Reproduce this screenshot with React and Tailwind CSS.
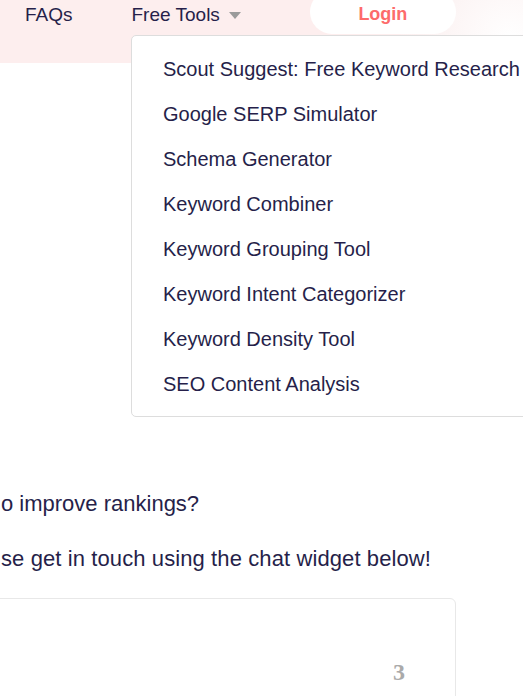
import React from 'react'

const tools = [
  'Scout Suggest: Free Keyword Research',
  'Google SERP Simulator',
  'Schema Generator',
  'Keyword Combiner',
  'Keyword Grouping Tool',
  'Keyword Intent Categorizer',
  'Keyword Density Tool',
  'SEO Content Analysis',
];

const App = () => {
  return (
    <div className="relative w-[523px] h-[696px] overflow-hidden bg-white text-[#261f4a]" style={{ fontFamily: '"Liberation Sans", Arial, sans-serif' }}>
      {/* Header */}
      <header className="relative h-[63px] bg-[#fdeeee] overflow-hidden">
        <div className="absolute -top-[60px] left-[400px] w-[220px] h-[200px] rounded-full bg-[radial-gradient(circle,#ffffff_0%,#fbf1f1_60%,#fdeeee_100%)]" />
        <nav className="relative flex items-start text-[19px]">
          <a className="ml-[25px] mt-[4px] leading-[21px]">FAQs</a>
          <a className="ml-[59px] mt-[4px] leading-[21px] flex items-center">
            Free Tools
            <span className="ml-[9px] mt-[1px] w-0 h-0 border-l-[6px] border-r-[6px] border-t-[7px] border-l-transparent border-r-transparent border-t-[#9b9b9b]" />
          </a>
          <button className="ml-[69px] -mt-[10px] w-[146px] h-[44px] rounded-full bg-white text-[#fd6b6b] font-bold text-[18px] pt-[5px]">
            Login
          </button>
        </nav>
      </header>

      {/* Dropdown */}
      <div className="absolute left-[131px] top-[35px] w-[430px] border border-[#dddddd] rounded-[5px] bg-white py-[10px]">
        {tools.map((t) => (
          <div key={t} className="pl-[31px] h-[45px] leading-[46px] text-[20px] whitespace-nowrap">{t}</div>
        ))}
      </div>

      {/* Content */}
      <div className="pt-[426px] text-[22px]">
        <p className="leading-[30px] pl-[1px]">o improve rankings?</p>
        <p className="leading-[30px] mt-[25px] pl-[1px] tracking-[0.1px]">se get in touch using the chat widget below!</p>
        <div className="mt-[24px] -ml-[10px] w-[466px] h-[120px] border border-[#e8e8e8] rounded-[6px] flex justify-end">
          <span className="mr-[50px] mt-[61px] text-[24px] font-bold text-[#aaaaaa] leading-[24px]" style={{ fontFamily: '"Liberation Serif", serif' }}>3</span>
        </div>
      </div>
    </div>
  );
}

export default App;
